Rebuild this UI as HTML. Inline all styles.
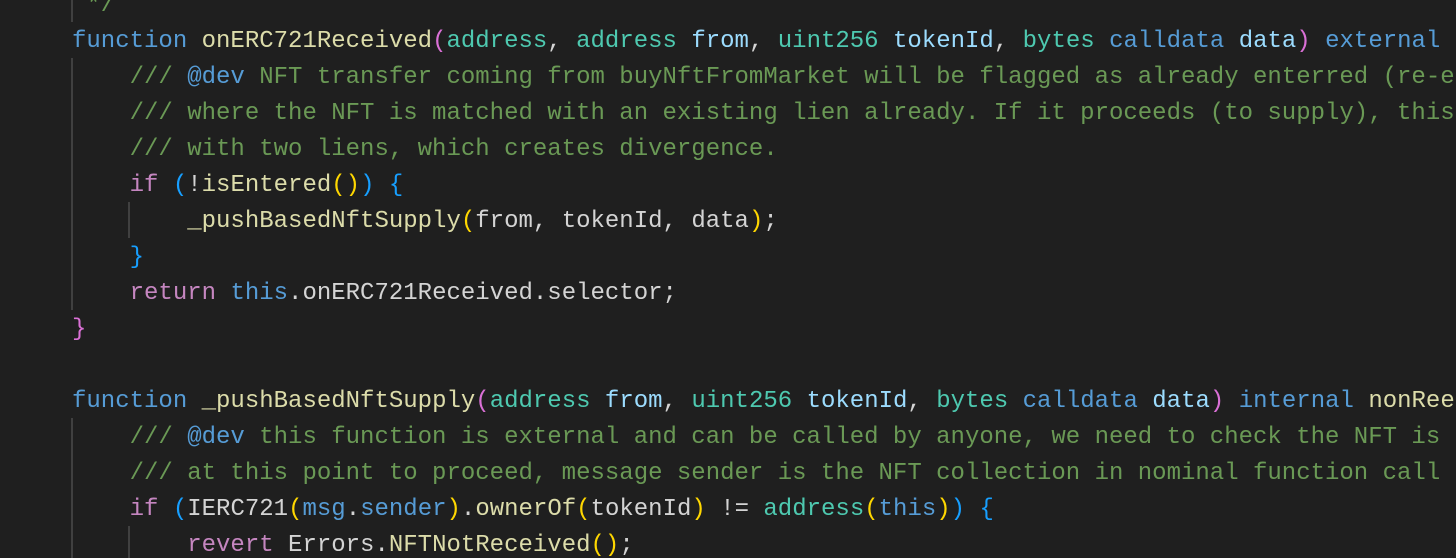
<!DOCTYPE html>
<html><head><meta charset="utf-8"><style>
html,body{margin:0;padding:0;background:#1f1f1f;width:1456px;height:558px;overflow:hidden;position:relative}
.c{position:absolute;left:72px;top:-12px;width:1384px;height:570px;overflow:hidden;font-family:"Liberation Mono",monospace;font-size:24px;line-height:36px;color:#d4d4d4;white-space:pre}
.g{position:absolute;width:2px;background:#404040}
.k{color:#569cd6}.f{color:#dcdcaa}.t{color:#4ec9b0}.v{color:#9cdcfe}.cm{color:#6a9955}.p{color:#c586c0}
.b1{color:#ffd700}.b2{color:#da70d6}.b3{color:#179fff}.w{color:#d4d4d4}
</style></head><body>
<div class="g" style="left:71px;top:0;height:22px"></div>
<div class="g" style="left:71px;top:58px;height:252px"></div>
<div class="g" style="left:128px;top:202px;height:36px"></div>
<div class="g" style="left:71px;top:418px;height:140px"></div>
<div class="g" style="left:128px;top:526px;height:32px"></div>
<div class="c"><span class="cm"> */</span>
<span class="k">function</span> <span class="f">onERC721Received</span><span class="b2">(</span><span class="t">address</span>, <span class="t">address</span> <span class="v">from</span>, <span class="t">uint256</span> <span class="v">tokenId</span>, <span class="t">bytes</span> <span class="k">calldata</span> <span class="v">data</span><span class="b2">)</span> <span class="k">external</span>
    <span class="cm">/// <span class="k">@dev</span> NFT transfer coming from buyNftFromMarket will be flagged as already enterred (re-e</span>
    <span class="cm">/// where the NFT is matched with an existing lien already. If it proceeds (to supply), this</span>
    <span class="cm">/// with two liens, which creates divergence.</span>
    <span class="p">if</span> <span class="b3">(</span>!<span class="f">isEntered</span><span class="b1">()</span><span class="b3">)</span> <span class="b3">{</span>
        <span class="f">_pushBasedNftSupply</span><span class="b1">(</span>from, tokenId, data<span class="b1">)</span>;
    <span class="b3">}</span>
    <span class="p">return</span> <span class="k">this</span>.onERC721Received.selector;
<span class="b2">}</span>

<span class="k">function</span> <span class="f">_pushBasedNftSupply</span><span class="b2">(</span><span class="t">address</span> <span class="v">from</span>, <span class="t">uint256</span> <span class="v">tokenId</span>, <span class="t">bytes</span> <span class="k">calldata</span> <span class="v">data</span><span class="b2">)</span> <span class="k">internal</span> <span class="f">nonRee</span>
    <span class="cm">/// <span class="k">@dev</span> this function is external and can be called by anyone, we need to check the NFT is</span>
    <span class="cm">/// at this point to proceed, message sender is the NFT collection in nominal function call</span>
    <span class="p">if</span> <span class="b3">(</span><span class="w">IERC721</span><span class="b1">(</span><span class="k">msg</span>.<span class="k">sender</span><span class="b1">)</span>.<span class="f">ownerOf</span><span class="b1">(</span>tokenId<span class="b1">)</span> != <span class="t">address</span><span class="b1">(</span><span class="k">this</span><span class="b1">)</span><span class="b3">)</span> <span class="b3">{</span>
        <span class="p">revert</span> Errors.<span class="f">NFTNotReceived</span><span class="b1">()</span>;
</div>
</body></html>
